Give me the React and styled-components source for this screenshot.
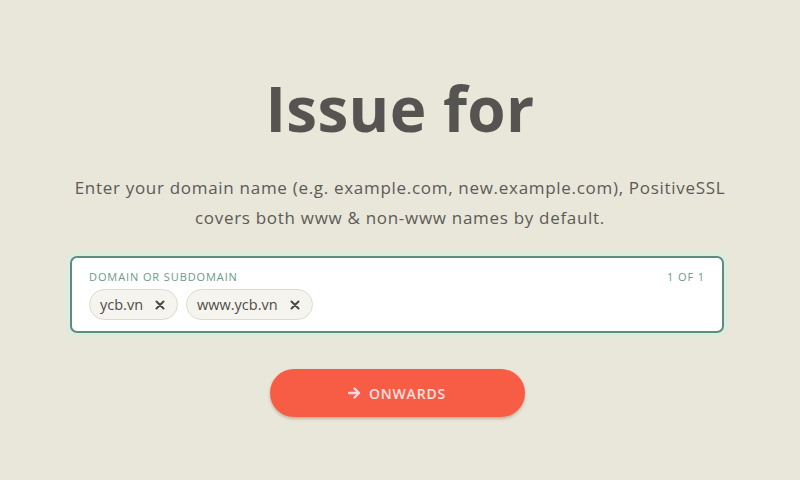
import React, { useState } from "react";
import styled, { createGlobalStyle } from "styled-components";

const GlobalStyle = createGlobalStyle`
    html, body {
        margin: 0;
        padding: 0;
        background: #e9e6da;
    }
    body {
        font-family: "Open Sans", "Noto Sans", sans-serif;
    }
    * {
        box-sizing: border-box;
    }
`;

function App() {
    const [domains, setDomains] = useState(["ycb.vn", "www.ycb.vn"]);
    const removeDomain = (name) => setDomains(domains.filter((d) => d !== name));
    return (
        <Page>
            <GlobalStyle />
            <Title>Issue for</Title>
            <Lead>
                Enter your domain name (e.g. example.com, new.example.com), PositiveSSL
                <br />
                covers both www &amp; non-www names by default.
            </Lead>
            <Field>
                <FieldHead>
                    <Label>Domain or subdomain</Label>
                    <Label>1 of 1</Label>
                </FieldHead>
                <Tags>
                    {domains.map((d) => (
                        <Tag key={d}>
                            {d}
                            <Remove onClick={() => removeDomain(d)}>
                                <svg width="10" height="10" viewBox="0 0 10 10">
                                    <path
                                        d="M1.5 1.5 L8.5 8.5 M8.5 1.5 L1.5 8.5"
                                        stroke="#4a4a46"
                                        strokeWidth="2"
                                        strokeLinecap="round"
                                    />
                                </svg>
                            </Remove>
                        </Tag>
                    ))}
                </Tags>
            </Field>
            <Button>
                <svg width="13" height="12" viewBox="0 0 13 12">
                    <path
                        d="M1 6 H11 M6.5 1.5 L11 6 L6.5 10.5"
                        stroke="#ffd9dc"
                        strokeWidth="2.4"
                        fill="none"
                        strokeLinecap="round"
                        strokeLinejoin="round"
                    />
                </svg>
                Onwards
            </Button>
        </Page>
    );
}

const Page = styled.div`
    width: 800px;
    height: 480px;
    display: flex;
    flex-direction: column;
    align-items: center;
    padding-top: 62px;
`;
const Title = styled.h1`
    margin: 0;
    font-size: 62px;
    line-height: 92px;
    font-weight: 700;
    color: #555451;
    letter-spacing: 0.3px;
`;
const Lead = styled.p`
    margin: 19px 0 0;
    text-align: center;
    font-size: 17px;
    line-height: 30px;
    letter-spacing: 0.7px;
    color: #5c5b56;
`;
const Field = styled.div`
    margin: 23px 6px 0 0;
    width: 654px;
    height: 77px;
    background: #ffffff;
    border: 2px solid #5e8d7f;
    border-radius: 7px;
    box-shadow: 0 0 0 4px rgba(214, 240, 222, 0.7);
    padding: 11px 17px 0;
`;
const FieldHead = styled.div`
    display: flex;
    justify-content: space-between;
`;
const Label = styled.span`
    font-size: 11px;
    line-height: 16px;
    letter-spacing: 0.9px;
    text-transform: uppercase;
    color: #6b9a8b;
`;
const Tags = styled.div`
    display: flex;
    gap: 8px;
    margin-top: 4px;
`;
const Tag = styled.div`
    display: flex;
    align-items: center;
    gap: 12px;
    height: 31px;
    padding: 0 12px 0 10px;
    background: #f6f4ef;
    border: 1px solid #dedacd;
    border-radius: 16px;
    font-size: 14.5px;
    color: #4e4d49;
`;
const Remove = styled.span`
    display: flex;
    align-items: center;
    cursor: pointer;
`;
const Button = styled.button`
    margin: 36px 6px 0 0;
    width: 255px;
    height: 48px;
    border: none;
    border-radius: 24px;
    background: #f75c45;
    box-shadow: 0 2px 3px rgba(120, 90, 60, 0.35);
    display: flex;
    align-items: center;
    justify-content: center;
    gap: 8px;
    font-family: "Open Sans", "Noto Sans", sans-serif;
    font-size: 14px;
    font-weight: 600;
    letter-spacing: 0.8px;
    text-transform: uppercase;
    color: #ffe1e2;
    cursor: pointer;
`;

export default App;
